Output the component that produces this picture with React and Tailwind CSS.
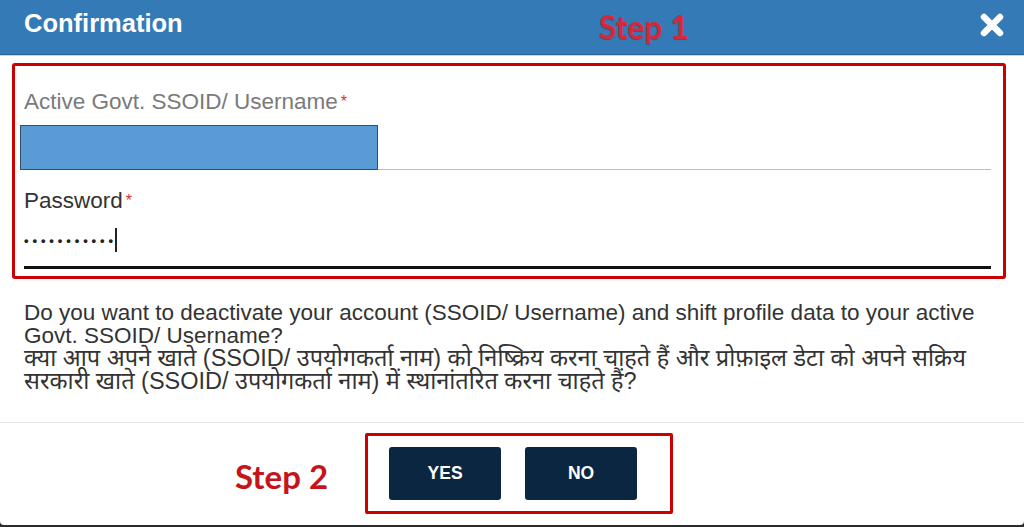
export default function App() {
  return (
    <div className="w-[1024px] h-[527px] bg-[#2b2b2b] overflow-hidden font-['Liberation_Sans',Arial,sans-serif]">
      <div className="h-[525px] bg-white rounded-b-[4px] flex flex-col">
        {/* header */}
        <div className="h-[55px] bg-[#337ab7] border-b border-[#2a6399] flex items-center pl-[24px] pr-[19px]">
          <h1 className="text-[25.5px] font-bold text-white leading-none -mt-[7px]">Confirmation</h1>
          <span className="ml-[416px] -mt-[1px] text-[32px] font-bold text-[#d22a3c] font-['Lato',sans-serif] [text-shadow:0_1px_1px_rgba(120,0,0,0.35)]">
            Step 1
          </span>
          <svg className="ml-auto -mt-[4px]" width="26" height="26" viewBox="0 0 26 26">
            <path d="M5 5 L21 21 M21 5 L5 21" stroke="white" strokeWidth="6.5" strokeLinecap="round" />
          </svg>
        </div>
        <div className="h-[1px] bg-[#b6daf5]" />

        {/* step 1 form */}
        <div className="mt-[7px] ml-[12px] w-[994px] h-[216px] border-[3px] border-[#cc0000] rounded-[3px] pl-[5px] pr-[12px] pt-[23px]">
          <div className="pl-[4px] text-[22.5px] leading-[26px] text-[#7a7a7a]">
            Active Govt. SSOID/ Username<span className="text-[#d9302c] text-[16px] align-top ml-[3px]">*</span>
          </div>
          <div className="mt-[10px] flex items-end">
            <div className="w-[358px] h-[45px] bg-[#5b9bd5] border border-[#2f4f73]" />
            <div className="flex-1 h-[1px] bg-[#bdbdbd]" />
          </div>
          <div className="mt-[18px] pl-[4px] text-[22.5px] leading-[26px] text-[#333]">
            Password<span className="text-[#d9302c] text-[16px] align-top ml-[3px]">*</span>
          </div>
          <div className="mt-[13px] pl-[4px] h-[26px] flex items-center text-[#222]">
            <span className="text-[13px] tracking-[3.9px] font-bold leading-none">•••••••••••</span>
            <span className="w-[2px] h-[24px] bg-[#222] -ml-[2px]" />
          </div>
          <div className="mt-[13px] ml-[4px] h-[3px] bg-[#111]" />
        </div>

        {/* message */}
        <div className="mt-[22px] pl-[24px] text-[22.5px] leading-[23px] text-[#333] font-['Liberation_Sans','Noto_Sans','Noto_Sans_Devanagari',sans-serif]">
          <p>Do you want to deactivate your account (SSOID/ Username) and shift profile data to your active</p>
          <p>Govt. SSOID/ Username?</p>
          <p className="text-[23.5px]">क्या आप अपने खाते (SSOID/ उपयोगकर्ता नाम) को निष्क्रिय करना चाहते हैं और प्रोफ़ाइल डेटा को अपने सक्रिय</p>
          <p className="text-[23.5px]">सरकारी खाते (SSOID/ उपयोगकर्ता नाम) में स्थानांतरित करना चाहते हैं?</p>
        </div>

        <div className="mt-[29px] h-[1px] bg-[#e5e5e5]" />

        {/* footer */}
        <div className="flex items-center pl-[235px] pt-[10px]">
          <span className="text-[33px] font-bold text-[#c4141c] font-['Lato',sans-serif] mt-[6px]">Step 2</span>
          <div className="ml-[37px] w-[308px] h-[81px] border-[3px] border-[#cc0000] rounded-[2px] flex items-center gap-[24px] pl-[21px]">
            <button className="w-[112px] h-[53px] bg-[#0b2640] rounded-[3px] text-white font-bold text-[17.5px]">YES</button>
            <button className="w-[112px] h-[53px] bg-[#0b2640] rounded-[3px] text-white font-bold text-[17.5px]">NO</button>
          </div>
        </div>
      </div>
    </div>
  );
}
